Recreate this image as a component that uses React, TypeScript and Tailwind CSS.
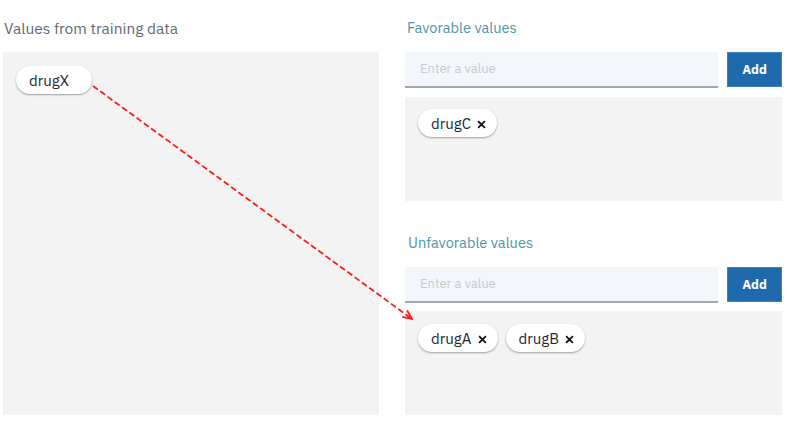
import React from "react";

const font = { fontFamily: '"IBM Plex Sans", "Open Sans", "Liberation Sans", sans-serif' };

function Chip({ label, removable = true }: { label: string; removable?: boolean }) {
  return (
    <div className="flex h-[28px] items-center rounded-full bg-white pl-[13px] pr-[11px] text-[15px] text-[#1c2733] shadow-[0_1px_2px_rgba(0,0,0,0.35)]">
      <span className="leading-none">{label}</span>
      {removable ? (
        <svg className="ml-[6px] mt-[2px]" width="9" height="9" viewBox="0 0 10 10">
          <path d="M1.2 1.2 L8.8 8.8 M8.8 1.2 L1.2 8.8" stroke="#111" strokeWidth="2" />
        </svg>
      ) : (
        <span className="w-[12px]" />
      )}
    </div>
  );
}

function ValueInput() {
  return (
    <div className="flex h-[36px] gap-[9px]">
      <div className="flex flex-1 items-center border-b-2 border-[#a2a8ae] bg-[#f3f7fb] pl-[15px] text-[13px] text-[#c5cad0]">
        Enter a value
      </div>
      <button className="h-[35px] w-[55px] border border-[#3b7fbd] bg-[#1f6aac] text-[13px] font-bold text-white">
        Add
      </button>
    </div>
  );
}

export default function App() {
  return (
    <div className="relative h-[421px] w-[793px] bg-white" style={font}>
      <div className="flex gap-[26px] pl-[3px]">
        <div className="w-[376px]">
          <div className="flex h-[52px] items-start pt-[17px] pl-[1px] text-[15.5px] leading-[22px] text-[#5f6a75]">
            Values from training data
          </div>
          <div className="h-[363px] bg-[#f3f3f3] px-[13px] pt-[14px]">
            <div className="flex">
              <Chip label="drugX" removable={false} />
            </div>
          </div>
        </div>

        <div className="w-[377px]">
          <div className="flex h-[52px] items-start pt-[18px] pl-[2px] text-[14.6px] leading-[20px] text-[#5093aa]">
            Favorable values
          </div>
          <ValueInput />
          <div className="mt-[9px] h-[104px] bg-[#f3f3f3] px-[13px] pt-[12px]">
            <div className="flex gap-[8px]">
              <Chip label="drugC" />
            </div>
          </div>

          <div className="flex h-[66px] items-start pt-[32px] pl-[3px] text-[14.6px] leading-[20px] text-[#5093aa]">
            Unfavorable values
          </div>
          <ValueInput />
          <div className="mt-[8px] h-[104px] bg-[#f3f3f3] px-[13px] pt-[13px]">
            <div className="flex gap-[8px]">
              <Chip label="drugA" />
              <Chip label="drugB" />
            </div>
          </div>
        </div>
      </div>

      <svg className="pointer-events-none absolute left-0 top-0" width="793" height="421">
        <defs>
          <marker id="ah" markerWidth="11" markerHeight="10" refX="10" refY="5" orient="auto" markerUnits="userSpaceOnUse">
            <path d="M1 1 L10 5 L1 9" fill="none" stroke="#ff1a1a" strokeWidth="1.8" />
          </marker>
        </defs>
        <line x1="93" y1="86" x2="412" y2="319" stroke="#ff1a1a" strokeWidth="1.8" strokeDasharray="6 3" markerEnd="url(#ah)" />
      </svg>
    </div>
  );
}
